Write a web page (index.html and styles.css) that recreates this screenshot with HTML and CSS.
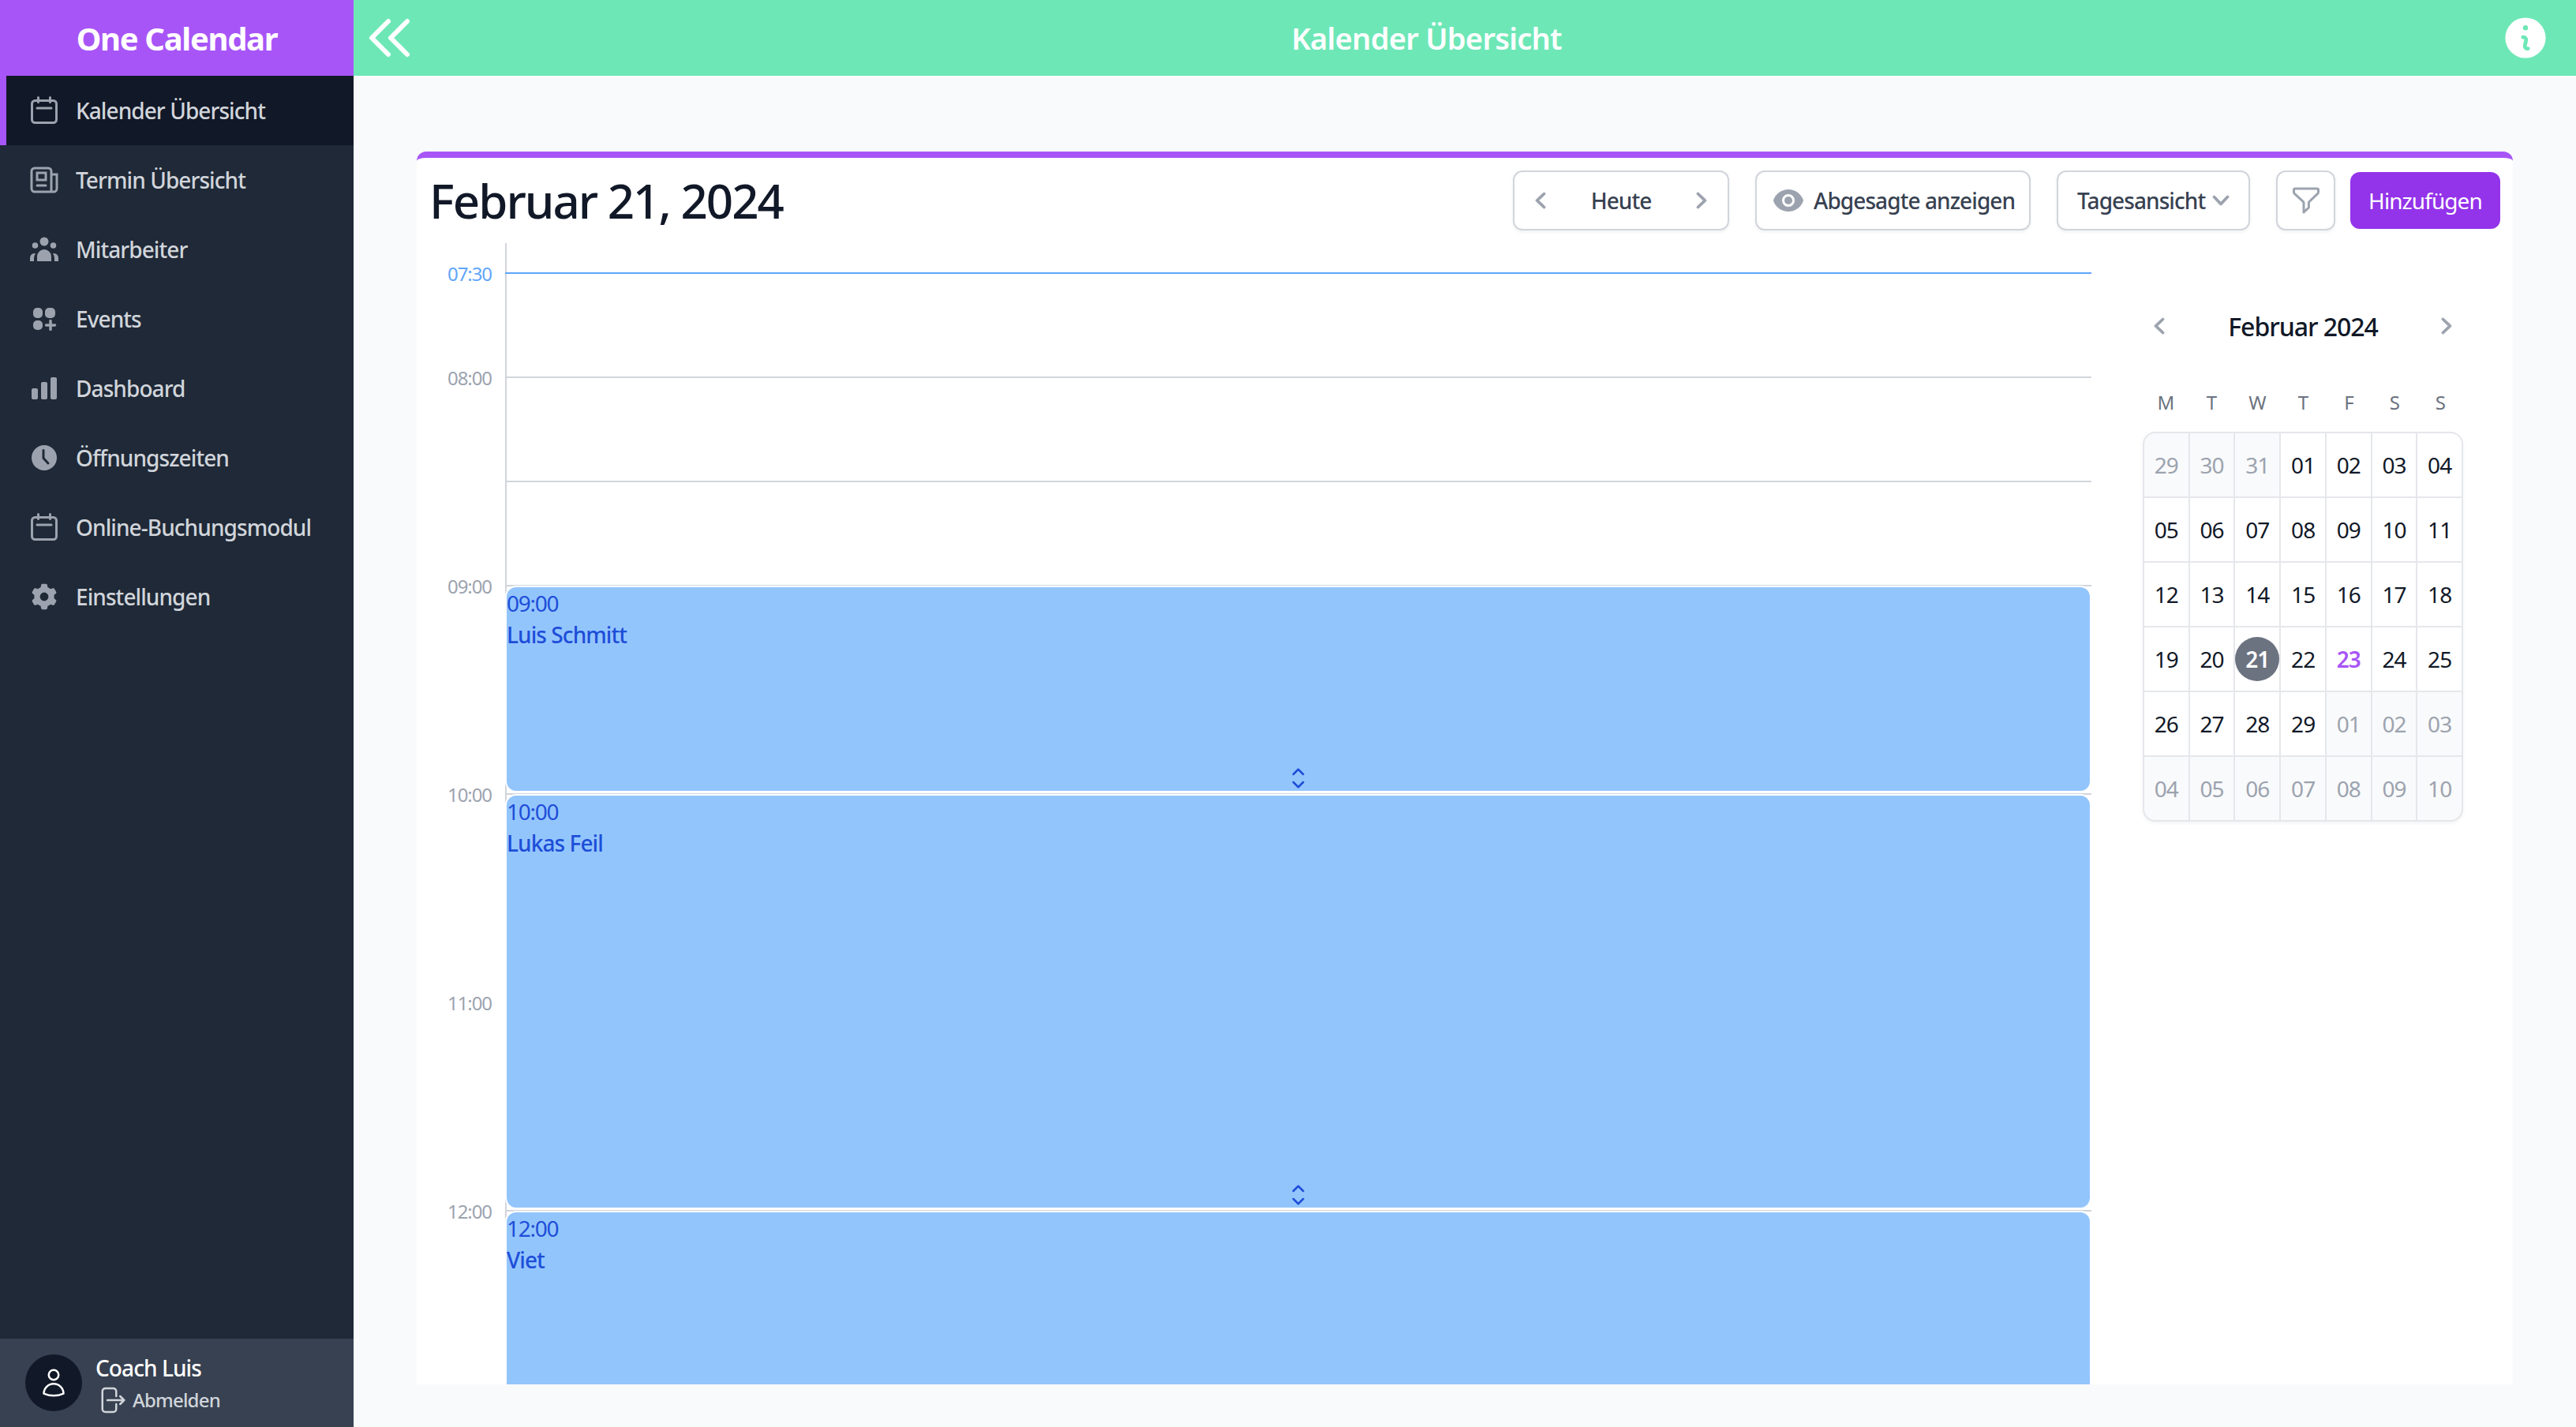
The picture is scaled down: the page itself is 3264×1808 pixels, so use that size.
FILE: index.html
```html
<!DOCTYPE html>
<html lang="de">
<head>
    <meta charset="UTF-8">
    <meta name="viewport" content="width=device-width, initial-scale=1.0">
    <title>One Calendar</title>
    <link rel="stylesheet" href="styles.css">
</head>
<body>
    <svg class="sprites" xmlns="http://www.w3.org/2000/svg">
        <symbol id="cal" viewBox="0 0 36 36">
            <rect x="2.5" y="5.5" width="31" height="28" rx="4" fill="none" stroke="currentColor" stroke-width="3"/>
            <path d="M10.5 1.5v6M25.5 1.5v6M9 15h18" fill="none" stroke="currentColor" stroke-width="3" stroke-linecap="round"/>
        </symbol>
        <symbol id="left" viewBox="0 0 20 20">
            <path d="M12.79 5.23a.75.75 0 01-.02 1.06L8.832 10l3.938 3.71a.75.75 0 11-1.04 1.08l-4.5-4.25a.75.75 0 010-1.08l4.5-4.25a.75.75 0 011.06.02z"/>
        </symbol>
        <symbol id="right" viewBox="0 0 20 20">
            <path d="M7.21 14.77a.75.75 0 01.02-1.06L11.168 10 7.23 6.29a.75.75 0 111.04-1.08l4.5 4.25a.75.75 0 010 1.08l-4.5 4.25a.75.75 0 01-1.06-.02z"/>
        </symbol>
        <symbol id="updown" viewBox="0 0 24 24">
            <path fill="none" stroke="currentColor" stroke-width="1.5" stroke-linecap="round" stroke-linejoin="round" d="M8.25 15L12 18.75 15.75 15m-7.5-6L12 5.25 15.75 9"/>
        </symbol>
    </svg>

    <aside class="sidebar">
        <div class="brand">One Calendar</div>
        <nav class="menu">
            <a class="menu-item active">
                <svg class="menu-icon"><use href="#cal"/></svg>
                <span>Kalender Übersicht</span>
            </a>
            <a class="menu-item">
                <svg class="menu-icon" viewBox="0 0 36 36">
                    <path d="M27 33H6a4 4 0 01-4-4V7a4 4 0 014-4h17a4 4 0 014 4v26zm0 0h3a4 4 0 004-4V11h-7" fill="none" stroke="currentColor" stroke-width="3"/>
                    <path d="M9 9h11v9H9zM9 25h11" fill="none" stroke="currentColor" stroke-width="3" stroke-linecap="round"/>
                </svg>
                <span>Termin Übersicht</span>
            </a>
            <a class="menu-item">
                <svg class="menu-icon" viewBox="0 0 36 36">
                    <circle cx="18" cy="8" r="5.5" fill="currentColor"/>
                    <circle cx="6.5" cy="13" r="3.8" fill="currentColor"/>
                    <circle cx="29.5" cy="13" r="3.8" fill="currentColor"/>
                    <path fill="currentColor" d="M9 33v-6a9 9 0 0118 0v6zM0 33v-4a6 6 0 017-6 12 12 0 00-2 7v3zM36 33v-4a6 6 0 00-7-6 12 12 0 012 7v3z"/>
                </svg>
                <span>Mitarbeiter</span>
            </a>
            <a class="menu-item">
                <svg class="menu-icon" viewBox="0 0 36 36">
                    <rect x="4" y="4" width="12" height="13" rx="5" fill="currentColor"/>
                    <rect x="19" y="4" width="13" height="13" rx="5" fill="currentColor"/>
                    <rect x="4" y="20" width="12" height="12" rx="5" fill="currentColor"/>
                    <path d="M26 20.5v11M20.5 26h11" fill="none" stroke="currentColor" stroke-width="3.5" stroke-linecap="round"/>
                </svg>
                <span>Events</span>
            </a>
            <a class="menu-item">
                <svg class="menu-icon" viewBox="0 0 36 36">
                    <rect x="2" y="18" width="8" height="14" rx="2" fill="currentColor"/>
                    <rect x="14" y="10" width="8" height="22" rx="2" fill="currentColor"/>
                    <rect x="26" y="4" width="8" height="28" rx="2" fill="currentColor"/>
                </svg>
                <span>Dashboard</span>
            </a>
            <a class="menu-item">
                <svg class="menu-icon" viewBox="0 0 36 36">
                    <circle cx="18" cy="18" r="16" fill="currentColor"/>
                    <path d="M17 8.5v10l6 6.5" fill="none" stroke="#1f2937" stroke-width="3" stroke-linecap="round" stroke-linejoin="round"/>
                </svg>
                <span>Öffnungszeiten</span>
            </a>
            <a class="menu-item">
                <svg class="menu-icon"><use href="#cal"/></svg>
                <span>Online-Buchungsmodul</span>
            </a>
            <a class="menu-item">
                <svg class="menu-icon" viewBox="0 0 20 20">
                    <path fill="currentColor" fill-rule="evenodd" d="M7.84 1.804A1 1 0 018.82 1h2.36a1 1 0 01.98.804l.331 1.652a6.993 6.993 0 011.929 1.115l1.598-.54a1 1 0 011.186.447l1.18 2.044a1 1 0 01-.205 1.251l-1.267 1.113a7.047 7.047 0 010 2.228l1.267 1.113a1 1 0 01.206 1.25l-1.18 2.045a1 1 0 01-1.187.447l-1.598-.54a6.993 6.993 0 01-1.929 1.115l-.33 1.652a1 1 0 01-.98.804H8.82a1 1 0 01-.98-.804l-.331-1.652a6.993 6.993 0 01-1.929-1.115l-1.598.54a1 1 0 01-1.186-.447l-1.18-2.044a1 1 0 01.205-1.251l1.267-1.114a7.05 7.05 0 010-2.227L1.821 7.773a1 1 0 01-.206-1.25l1.18-2.045a1 1 0 011.187-.447l1.598.54A6.993 6.993 0 017.51 3.456l.33-1.652zM10 13a3 3 0 100-6 3 3 0 000 6z"/>
                </svg>
                <span>Einstellungen</span>
            </a>
        </nav>
        <div class="user">
            <div class="avatar">
                <svg class="avatar-icon" viewBox="0 0 24 24">
                    <path fill="none" stroke="currentColor" stroke-width="1.5" stroke-linecap="round" stroke-linejoin="round" d="M15.75 6a3.75 3.75 0 11-7.5 0 3.75 3.75 0 017.5 0zM4.501 20.118a7.5 7.5 0 0114.998 0A17.933 17.933 0 0112 21.75c-2.676 0-5.216-.584-7.499-1.632z"/>
                </svg>
            </div>
            <div class="user-text">
                <div class="user-name">Coach Luis</div>
                <div class="logout">
                    <svg class="logout-icon" viewBox="0 0 24 24">
                        <path fill="none" stroke="currentColor" stroke-width="1.5" stroke-linecap="round" stroke-linejoin="round" d="M15.75 9V5.25A2.25 2.25 0 0013.5 3h-6a2.25 2.25 0 00-2.25 2.25v13.5A2.25 2.25 0 007.5 21h6a2.25 2.25 0 002.25-2.25V15m3 0l3-3m0 0l-3-3m3 3H9"/>
                    </svg>
                    <span>Abmelden</span>
                </div>
            </div>
        </div>
    </aside>

    <main class="main">
        <header class="topbar">
            <svg class="collapse-icon" viewBox="0 0 24 24">
                <path fill="none" stroke="currentColor" stroke-width="2" stroke-linecap="round" stroke-linejoin="round" d="M11 19l-7-7 7-7m8 14l-7-7 7-7"/>
            </svg>
            <div class="page-title">Kalender Übersicht</div>
            <svg class="info-icon" viewBox="0 0 20 20">
                <path fill="currentColor" fill-rule="evenodd" d="M18 10a8 8 0 11-16 0 8 8 0 0116 0zm-7-4a1 1 0 11-2 0 1 1 0 012 0zM9 9a.75.75 0 000 1.5h.253a.25.25 0 01.244.304l-.459 2.066A1.75 1.75 0 0010.747 15H11a.75.75 0 000-1.5h-.253a.25.25 0 01-.244-.304l.459-2.066A1.75 1.75 0 009.253 9H9z"/>
            </svg>
        </header>

        <div class="content">
            <section class="card">
                <div class="toolbar">
                    <h1 class="date-title">Februar 21, 2024</h1>
                    <div class="btn today-nav">
                        <svg class="chev"><use href="#left"/></svg>
                        <span>Heute</span>
                        <svg class="chev"><use href="#right"/></svg>
                    </div>
                    <div class="btn cancelled">
                        <svg class="eye" viewBox="0 0 20 20">
                            <path fill="currentColor" d="M10 12.5a2.5 2.5 0 100-5 2.5 2.5 0 000 5z"/>
                            <path fill="currentColor" fill-rule="evenodd" d="M.664 10.59a1.651 1.651 0 010-1.186A10.004 10.004 0 0110 3c4.257 0 7.893 2.66 9.336 6.41.147.381.146.804 0 1.186A10.004 10.004 0 0110 17c-4.257 0-7.893-2.66-9.336-6.41zM14 10a4 4 0 11-8 0 4 4 0 018 0z"/>
                        </svg>
                        <span>Abgesagte anzeigen</span>
                    </div>
                    <div class="btn view-select">
                        <span>Tagesansicht</span>
                        <svg class="chev" viewBox="0 0 20 20">
                            <path d="M5.23 7.21a.75.75 0 011.06.02L10 11.168l3.71-3.938a.75.75 0 111.08 1.04l-4.25 4.5a.75.75 0 01-1.08 0l-4.25-4.5a.75.75 0 01.02-1.06z"/>
                        </svg>
                    </div>
                    <div class="btn filter">
                        <svg class="funnel" viewBox="0 0 36 36">
                            <path fill="none" stroke="currentColor" stroke-width="3" stroke-linecap="round" stroke-linejoin="round" d="M4 3h28a1.5 1.5 0 011.5 1.5v3.2a2 2 0 01-.6 1.4L22 19.5a2 2 0 00-.6 1.4v6L15 33V21a2 2 0 00-.6-1.4L3.1 9.1a2 2 0 01-.6-1.4V4.5A1.5 1.5 0 014 3z"/>
                        </svg>
                    </div>
                    <button class="add-btn">Hinzufügen</button>
                </div>

                <div class="schedule">
                    <div class="times">
                        <div class="time now">07:30</div>
                        <div class="time">08:00</div>
                        <div class="time"></div>
                        <div class="time tall">09:00</div>
                        <div class="time tall">10:00</div>
                        <div class="time tall">11:00</div>
                        <div class="time tall">12:00</div>
                    </div>
                    <div class="day">
                        <div class="slot now-line"></div>
                        <div class="slot"></div>
                        <div class="slot"></div>
                        <div class="slot"></div>
                        <div class="slot"></div>
                        <div class="slot"></div>
                        <div class="slot"></div>
                        <div class="slot"></div>
                        <div class="slot"></div>
                        <div class="slot"></div>
                        <div class="events">
                            <div class="event one-hour">
                                <div class="event-time">09:00</div>
                                <div class="event-name">Luis Schmitt</div>
                                <svg class="handle"><use href="#updown"/></svg>
                            </div>
                            <div class="event two-hours">
                                <div class="event-time">10:00</div>
                                <div class="event-name">Lukas Feil</div>
                                <svg class="handle"><use href="#updown"/></svg>
                            </div>
                            <div class="event two-hours">
                                <div class="event-time">12:00</div>
                                <div class="event-name">Viet</div>
                            </div>
                        </div>
                    </div>
                    <div class="mini">
                        <div class="mini-head">
                            <svg class="mini-chev"><use href="#left"/></svg>
                            <span class="mini-title">Februar 2024</span>
                            <svg class="mini-chev"><use href="#right"/></svg>
                        </div>
                        <div class="weekdays">
                            <span>M</span><span>T</span><span>W</span><span>T</span><span>F</span><span>S</span><span>S</span>
                        </div>
                        <div class="month">
                            <div class="cell off">29</div><div class="cell off">30</div><div class="cell off">31</div><div class="cell">01</div><div class="cell">02</div><div class="cell">03</div><div class="cell">04</div>
                            <div class="cell">05</div><div class="cell">06</div><div class="cell">07</div><div class="cell">08</div><div class="cell">09</div><div class="cell">10</div><div class="cell">11</div>
                            <div class="cell">12</div><div class="cell">13</div><div class="cell">14</div><div class="cell">15</div><div class="cell">16</div><div class="cell">17</div><div class="cell">18</div>
                            <div class="cell">19</div><div class="cell">20</div><div class="cell"><span class="selected">21</span></div><div class="cell">22</div><div class="cell marked">23</div><div class="cell">24</div><div class="cell">25</div>
                            <div class="cell">26</div><div class="cell">27</div><div class="cell">28</div><div class="cell">29</div><div class="cell off">01</div><div class="cell off">02</div><div class="cell off">03</div>
                            <div class="cell off">04</div><div class="cell off">05</div><div class="cell off">06</div><div class="cell off">07</div><div class="cell off">08</div><div class="cell off">09</div><div class="cell off">10</div>
                        </div>
                    </div>
                </div>
            </section>
        </div>
    </main>
</body>
</html>
```

FILE: styles.css
```css
* {
    box-sizing: border-box;
    letter-spacing: -0.033em;
}
body {
    margin: 0;
    height: 100vh;
    display: flex;
    overflow: hidden;
    font-family: "Noto Sans", sans-serif;
    background-color: #f9fafb;
    color: #111827;
}
.sprites {
    display: none;
}

/* sidebar */
.sidebar {
    width: 448px;
    flex-shrink: 0;
    display: flex;
    flex-direction: column;
    background-color: #1f2937;
}
.brand {
    height: 96px;
    display: flex;
    align-items: center;
    justify-content: center;
    background-color: #a855f7;
    color: #fff;
    font-size: 40px;
    font-weight: 700;
}
.menu {
    flex: 1;
}
.menu-item {
    height: 88px;
    display: flex;
    align-items: center;
    gap: 22px;
    padding-left: 38px;
    color: #d1d5db;
    font-size: 28px;
    font-weight: 500;
}
.menu-item.active {
    background-color: #111827;
    border-left: 8px solid #a855f7;
    padding-left: 30px;
}
.menu-icon {
    width: 36px;
    height: 36px;
    flex-shrink: 0;
    color: #9ca3af;
}
.user {
    height: 112px;
    display: flex;
    align-items: center;
    gap: 17px;
    padding-left: 32px;
    background-color: #374151;
}
.avatar {
    width: 72px;
    height: 72px;
    display: flex;
    align-items: center;
    justify-content: center;
    border-radius: 50%;
    background-color: #111827;
    color: #fff;
}
.avatar-icon {
    width: 40px;
    height: 40px;
}
.user-text {
    padding-top: 5px;
}
.user-name {
    color: #fff;
    font-size: 28px;
    font-weight: 500;
    line-height: 36px;
}
.logout {
    display: flex;
    align-items: center;
    gap: 7px;
    margin-top: 3px;
    color: #d1d5db;
    font-size: 24px;
    font-weight: 500;
    line-height: 32px;
}
.logout-icon {
    width: 40px;
    height: 40px;
    flex-shrink: 0;
}

/* top bar */
.main {
    flex: 1;
    min-width: 0;
    display: flex;
    flex-direction: column;
}
.topbar {
    height: 96px;
    flex-shrink: 0;
    display: flex;
    align-items: center;
    padding: 0 32px 0 11px;
    background-color: #6ee7b7;
    color: #fff;
}
.collapse-icon {
    width: 72px;
    height: 72px;
    flex-shrink: 0;
}
.page-title {
    flex: 1;
    padding-right: 84px;
    text-align: center;
    font-size: 38px;
    font-weight: 600;
    letter-spacing: -0.019em;
}
.info-icon {
    width: 64px;
    height: 64px;
    flex-shrink: 0;
}

/* card */
.content {
    flex: 1;
    min-height: 0;
    padding: 96px 80px 54px;
}
.card {
    height: 100%;
    display: flex;
    flex-direction: column;
    overflow: hidden;
    background-color: #fff;
    border-top: 8px solid #a855f7;
    border-radius: 12px 12px 0 0;
}
.toolbar {
    height: 108px;
    flex-shrink: 0;
    display: flex;
    align-items: center;
    padding: 0 16px;
}
.date-title {
    flex: 1;
    margin: 0;
    font-size: 60px;
    font-weight: 500;
    color: #111827;
}
.btn {
    height: 76px;
    display: flex;
    align-items: center;
    margin-right: 33px;
    background-color: #fff;
    border: 2px solid #d1d5db;
    border-radius: 12px;
    box-shadow: 0 2px 4px rgba(0, 0, 0, 0.06);
    color: #374151;
    font-size: 28px;
    font-weight: 500;
}
.chev {
    width: 40px;
    height: 40px;
    flex-shrink: 0;
    color: #9ca3af;
    fill: currentColor;
    stroke: currentColor;
    stroke-width: 0.5;
}
.today-nav {
    width: 274px;
    justify-content: space-between;
    padding: 0 13px;
}
.cancelled {
    width: 349px;
    gap: 12px;
    padding-left: 20px;
}
.eye {
    width: 40px;
    height: 40px;
    flex-shrink: 0;
    color: #9ca3af;
}
.view-select {
    width: 245px;
    padding-left: 24px;
}
.filter {
    width: 75px;
    justify-content: center;
    margin-right: 19px;
}
.funnel {
    width: 36px;
    height: 36px;
    color: #9ca3af;
}
.add-btn {
    width: 190px;
    height: 72px;
    background-color: #9333ea;
    border: none;
    border-radius: 12px;
    color: #fff;
    font-family: inherit;
    font-size: 28px;
    font-weight: 400;
}

/* day schedule */
.schedule {
    flex: 1;
    min-height: 0;
    display: flex;
}
.times {
    width: 112px;
    flex-shrink: 0;
    padding: 25px 17px 0 0;
    color: #9ca3af;
    font-size: 24px;
    line-height: 28px;
    text-align: right;
}
.time {
    height: 132px;
    letter-spacing: -0.045em;
}
.time.tall {
    height: 264px;
}
.time.now {
    color: #60a5fa;
}
.day {
    position: relative;
    width: 2010px;
    flex-shrink: 0;
    padding-top: 37px;
    border-left: 2px solid #d1d5db;
}
.slot {
    height: 132px;
    border-top: 2px solid #d1d5db;
}
.now-line {
    margin-left: -2px;
    border-top-color: #60a5fa;
}
.events {
    position: absolute;
    top: 436px;
    left: 0;
    right: 2px;
    display: flex;
    flex-direction: column;
    gap: 6px;
}
.event {
    flex-shrink: 0;
    display: flex;
    flex-direction: column;
    background-color: #93c5fd;
    border-radius: 12px;
    box-shadow: 0 0 0 2px #fff;
    color: #1d4ed8;
    font-size: 28px;
    line-height: 40px;
}
.one-hour {
    height: 258px;
}
.two-hours {
    height: 522px;
}
.event-time {
    letter-spacing: -0.046em;
}
.event-name {
    font-weight: 500;
}
.handle {
    width: 40px;
    height: 40px;
    flex-shrink: 0;
    align-self: center;
    margin-top: auto;
    margin-bottom: -4px;
}

/* month picker */
.mini {
    flex: 1;
    padding: 85px 0 0 65px;
}
.mini-head {
    width: 406px;
    height: 40px;
    display: flex;
    align-items: center;
    justify-content: space-between;
    padding: 0 1px;
}
.mini-title {
    font-size: 32px;
    font-weight: 500;
    color: #111827;
}
.mini-chev {
    width: 40px;
    height: 40px;
    color: #9ca3af;
    fill: currentColor;
    stroke: currentColor;
    stroke-width: 0.5;
}
.weekdays {
    width: 406px;
    display: grid;
    grid-template-columns: repeat(7, 1fr);
    margin: 63px 0 23px;
    color: #6b7280;
    font-size: 24px;
    line-height: 28px;
    text-align: center;
}
.month {
    width: 406px;
    display: grid;
    grid-template-columns: repeat(7, 1fr);
    gap: 2px;
    overflow: hidden;
    background-color: #e5e7eb;
    border: 2px solid #e5e7eb;
    border-radius: 16px;
    box-shadow: 0 2px 4px rgba(0, 0, 0, 0.05);
}
.cell {
    height: 80px;
    display: flex;
    align-items: center;
    justify-content: center;
    background-color: #fff;
    font-size: 28px;
    color: #111827;
}
.cell.off {
    background-color: #f9fafb;
    color: #9ca3af;
}
.cell.marked {
    color: #a855f7;
    font-weight: 600;
}
.selected {
    width: 56px;
    height: 56px;
    display: flex;
    align-items: center;
    justify-content: center;
    border-radius: 50%;
    background-color: #6b7280;
    color: #fff;
    font-weight: 600;
}
```
